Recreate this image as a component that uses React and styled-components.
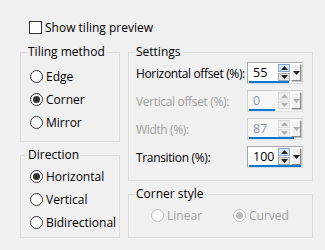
import React from 'react';
import styled, { createGlobalStyle } from 'styled-components';

const Global = createGlobalStyle`
  html, body { margin: 0; padding: 0; background: #f0f0f0; }
  body {
    font-family: "Open Sans", "Noto Sans", sans-serif;
    font-size: 12px;
    color: #000;
  }
`;

const Page = styled.div`
  width: 325px;
  height: 250px;
  box-sizing: border-box;
  padding: 21px 12px 0 20px;
  display: flex;
  flex-direction: column;
  background: #f0f0f0;
`;

const CheckRow = styled.label`
  display: flex;
  align-items: center;
  height: 13px;
  margin-left: 9px;
  line-height: 13px;
`;

const CheckBox = styled.span`
  width: 13px;
  height: 13px;
  box-sizing: border-box;
  border: 1px solid #333;
  background: #fff;
  margin-right: 3px;
`;

const Columns = styled.div`
  display: flex;
  gap: 8px;
  margin-top: 18px;
`;

const Column = styled.div`
  display: flex;
  flex-direction: column;
  gap: 13px;
  width: ${p => p.$w}px;
`;

const Group = styled.div`
  position: relative;
  box-sizing: border-box;
  border: 1px solid #dcdcdc;
  height: ${p => p.$h}px;
  padding: ${p => p.$pad};
  display: flex;
  flex-direction: column;
`;

const Legend = styled.span`
  position: absolute;
  top: -9px;
  left: 6px;
  padding: 0 1px;
  background: #f0f0f0;
  line-height: 16px;
  white-space: nowrap;
`;

const RadioRow = styled.label`
  display: flex;
  align-items: center;
  height: 23px;
  white-space: nowrap;
  color: ${p => (p.$disabled ? '#a0a0a0' : '#000')};
`;

const RadioCircle = styled.span`
  width: 13px;
  height: 13px;
  box-sizing: border-box;
  border-radius: 50%;
  border: 1px solid ${p => (p.$disabled ? '#bcbcbc' : '#333')};
  background: ${p => (p.$disabled ? '#fbfbfb' : '#fff')};
  display: flex;
  align-items: center;
  justify-content: center;
  margin-right: 3px;
  flex: none;
  &::after {
    content: '';
    display: ${p => (p.$checked ? 'block' : 'none')};
    width: 7px;
    height: 7px;
    border-radius: 50%;
    background: ${p => (p.$disabled ? '#bcbcbc' : '#333')};
  }
`;

const SettingRows = styled.div`
  display: flex;
  flex-direction: column;
  gap: 6px;
`;

const SettingRow = styled.div`
  display: grid;
  grid-template-columns: 111px 56px;
  align-items: center;
  height: 22px;
  color: ${p => (p.$disabled ? '#a0a0a0' : '#000')};
`;

const SettingLabel = styled.span`
  white-space: nowrap;
  letter-spacing: -0.35px;
`;

const Field = styled.div`
  box-sizing: border-box;
  width: 56px;
  height: 22px;
  border: 1px solid;
  border-color: ${p => (p.$disabled ? '#cfcfcf #e2e2e2 #e2e2e2 #cfcfcf' : '#a8a8a8 #d9d9d9 #d9d9d9 #a8a8a8')};
  background: ${p => (p.$disabled ? '#f6f6f6' : '#fff')};
  display: grid;
  grid-template-columns: 1fr 12px 10px;
  grid-template-rows: 18px 2px;
  column-gap: 1px;
  padding: 0 1px 0 1px;
`;

const Value = styled.span`
  padding-left: 4px;
  line-height: 20px;
  font-size: 12.5px;
  color: ${p => (p.$disabled ? '#8596b4' : '#000')};
`;

const Spin = styled.div`
  display: flex;
  flex-direction: column;
  gap: 1px;
  padding-top: 1px;
`;

const SpinBtn = styled.span`
  box-sizing: border-box;
  height: 8px;
  border: 1px solid ${p => (p.$disabled ? '#dcdcdc' : p.$up ? '#7ea7d3' : '#a8a8a8')};
  background: ${p => (p.$disabled ? '#f0f0f0' : p.$up ? '#dbe8f6' : '#e6e6e6')};
  display: flex;
  align-items: center;
  justify-content: center;
`;

const DropBtn = styled.span`
  box-sizing: border-box;
  margin-top: 1px;
  height: 17px;
  border: 1px solid;
  border-color: #fff #8a8a8a #8a8a8a #fff;
  background: #f0f0f0;
  display: flex;
  align-items: center;
  justify-content: center;
  box-shadow: 1px 1px 0 #c4c4c4;
`;

const Bar = styled.span`
  grid-column: 1 / -1;
  grid-row: 2;
  height: 2px;
  background: #0078d7;
`;

const CornerRow = styled.div`
  display: grid;
  grid-template-columns: 82px auto;
  padding-left: 22px;
  margin-top: 2px;
`;

const Tri = ({ up, color }) => (
  <svg width="7" height="4" viewBox="0 0 7 4">
    <polygon points={up ? '0,4 7,4 3.5,0' : '0,0 7,0 3.5,4'} fill={color} />
  </svg>
);

const Radio = ({ label, checked, disabled }) => (
  <RadioRow $disabled={disabled}>
    <RadioCircle $checked={checked} $disabled={disabled} />
    {label}
  </RadioRow>
);

const settings = [
  { label: 'Horizontal offset (%):', value: 55, min: -100, max: 100 },
  { label: 'Vertical offset (%):', value: 0, min: -100, max: 100, disabled: true },
  { label: 'Width (%):', value: 87, min: 1, max: 100, disabled: true },
  { label: 'Transition (%):', value: 100, min: 0, max: 100 },
];

const NumField = ({ value, min, max, disabled }) => {
  const pct = ((value - min) / (max - min)) * 100;
  const arrow = disabled ? '#b0b0b0' : '#222';
  return (
    <Field $disabled={disabled}>
      <Value $disabled={disabled}>{value}</Value>
      <Spin>
        <SpinBtn $up $disabled={disabled}><Tri up color={arrow} /></SpinBtn>
        <SpinBtn $disabled={disabled}><Tri color={arrow} /></SpinBtn>
      </Spin>
      <DropBtn><Tri color={arrow} /></DropBtn>
      <Bar style={{ width: `${pct}%` }} />
    </Field>
  );
};

export default function App() {
  return (
    <>
      <Global />
      <Page>
        <CheckRow>
          <CheckBox />
          Show tiling preview
        </CheckRow>
        <Columns>
          <Column $w={100}>
            <Group $h={90} $pad="12px 0 0 9px">
              <Legend>Tiling method</Legend>
              <Radio label="Edge" />
              <Radio label="Corner" checked />
              <Radio label="Mirror" />
            </Group>
            <Group $h={83} $pad="9px 0 0 9px">
              <Legend>Direction</Legend>
              <Radio label="Horizontal" checked />
              <Radio label="Vertical" />
              <Radio label="Bidirectional" />
            </Group>
          </Column>
          <Column $w={185}>
            <Group $h={129} $pad="9px 0 0 7px">
              <Legend>Settings</Legend>
              <SettingRows>
                {settings.map(s => (
                  <SettingRow key={s.label} $disabled={s.disabled}>
                    <SettingLabel>{s.label}</SettingLabel>
                    <NumField {...s} />
                  </SettingRow>
                ))}
              </SettingRows>
            </Group>
            <Group $h={44} $pad="7px 0 0 0">
              <Legend>Corner style</Legend>
              <CornerRow>
                <Radio label="Linear" disabled />
                <Radio label="Curved" checked disabled />
              </CornerRow>
            </Group>
          </Column>
        </Columns>
      </Page>
    </>
  );
}
